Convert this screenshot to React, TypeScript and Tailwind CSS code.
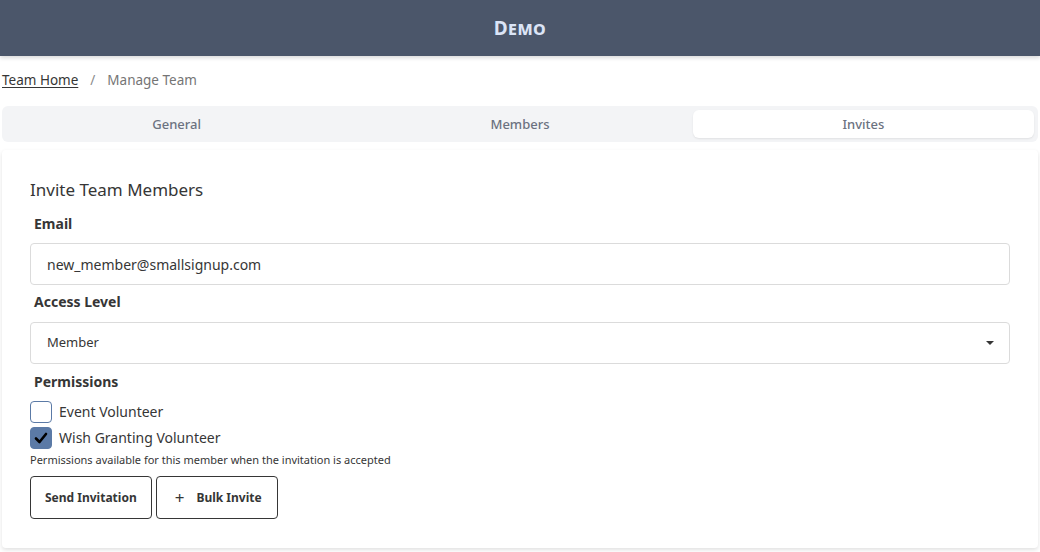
import React, { useState } from 'react'

const tabs = ['General', 'Members', 'Invites']

export default function App() {
  const [activeTab, setActiveTab] = useState('Invites')
  const [email, setEmail] = useState('new_member@smallsignup.com')
  const [level, setLevel] = useState('Member')
  const [perms, setPerms] = useState({ event: false, wish: true })

  return (
    <div className="min-h-[552px] bg-white font-['Noto_Sans',sans-serif] text-[#363636]">
      <header className="h-14 bg-[#4b566a] shadow-[0_2px_4px_rgba(0,0,0,0.15)] flex items-center justify-center">
        <h1 className="text-[19px] font-bold text-[#dbe4f6] [font-variant:small-caps] tracking-wide">Demo</h1>
      </header>

      <nav className="flex items-center h-12 px-[2px] text-[13.5px]">
        <a href="#" className="underline text-[#363636] underline-offset-2">Team Home</a>
        <span className="mx-3 text-[#8a8a8a]">/</span>
        <span className="text-[#757575]">Manage Team</span>
      </nav>

      <div className="mx-[2px] mt-[2px] grid grid-cols-3 gap-[2px] rounded-md bg-[#f3f4f6] p-1 h-9">
        {tabs.map(tab => (
          <button
            key={tab}
            onClick={() => setActiveTab(tab)}
            className={
              tab === activeTab
                ? 'rounded-md bg-white pt-[2px] text-[13px] font-medium text-[#6b7280] shadow-[0_1px_2px_rgba(0,0,0,0.08)]'
                : 'rounded-md pt-[2px] text-[13px] font-medium text-[#6b7280]'
            }
          >
            {tab}
          </button>
        ))}
      </div>

      <div className="mx-[2px] mt-2 rounded-sm bg-white px-7 pt-7 pb-[29px] shadow-[0_2px_4px_rgba(0,0,0,0.12)]">
        <h2 className="text-[17px] leading-6 text-[#363636] mb-3">Invite Team Members</h2>

        <label className="block px-1 text-[14px] leading-5 font-bold mb-[9px]">Email</label>
        <input
          value={email}
          onChange={e => setEmail(e.target.value)}
          className="block w-full h-[42px] rounded border border-[#dbdbdb] px-4 text-[14px] text-[#363636] outline-none"
        />

        <label className="block px-1 text-[14px] leading-5 font-bold mt-[7px] mb-[10px]">Access Level</label>
        <div className="relative">
          <select
            value={level}
            onChange={e => setLevel(e.target.value)}
            className="block w-full h-[42px] appearance-none rounded border border-[#dbdbdb] bg-white px-4 text-[13px] text-[#363636] outline-none"
          >
            <option>Member</option>
            <option>Admin</option>
          </select>
          <span className="pointer-events-none absolute right-4 top-[19px] border-x-[4px] border-t-[4px] border-x-transparent border-t-[#363636]" />
        </div>

        <label className="block px-1 text-[14px] leading-5 font-bold mt-2 mb-[9px]">Permissions</label>
        <div className="flex flex-col gap-1">
          <label className="flex items-center gap-[7px] text-[14px] leading-[22px]">
            <input
              type="checkbox"
              checked={perms.event}
              onChange={() => setPerms(p => ({ ...p, event: !p.event }))}
              className="sr-only"
            />
            <span className="flex h-[22px] w-[22px] items-center justify-center rounded border border-[#5b7aa6] bg-white" />
            Event Volunteer
          </label>
          <label className="flex items-center gap-[7px] text-[14px] leading-[22px]">
            <input
              type="checkbox"
              checked={perms.wish}
              onChange={() => setPerms(p => ({ ...p, wish: !p.wish }))}
              className="sr-only"
            />
            <span className="flex h-[22px] w-[22px] items-center justify-center rounded border border-[#5b7aa6] bg-[#5b7aa6]">
              <svg width="14" height="12" viewBox="0 0 14 12" fill="none">
                <path d="M2 6.5 L5.5 10 L12 2" stroke="#000" strokeWidth="2.6" strokeLinecap="round" strokeLinejoin="round" />
              </svg>
            </span>
            Wish Granting Volunteer
          </label>
        </div>
        <p className="mt-[3px] text-[11px] leading-4 text-[#363636]">Permissions available for this member when the invitation is accepted</p>

        <div className="mt-2 flex gap-1">
          <button className="h-[43px] rounded border border-[#363636] px-[14px] text-[12px] font-bold">Send Invitation</button>
          <button className="flex h-[43px] items-center gap-[12px] rounded border border-[#363636] pl-[18px] pr-[15px] text-[12px] font-bold">
            <span className="text-[17px] font-normal leading-none">+</span>
            Bulk Invite
          </button>
        </div>
      </div>
    </div>
  )
}
